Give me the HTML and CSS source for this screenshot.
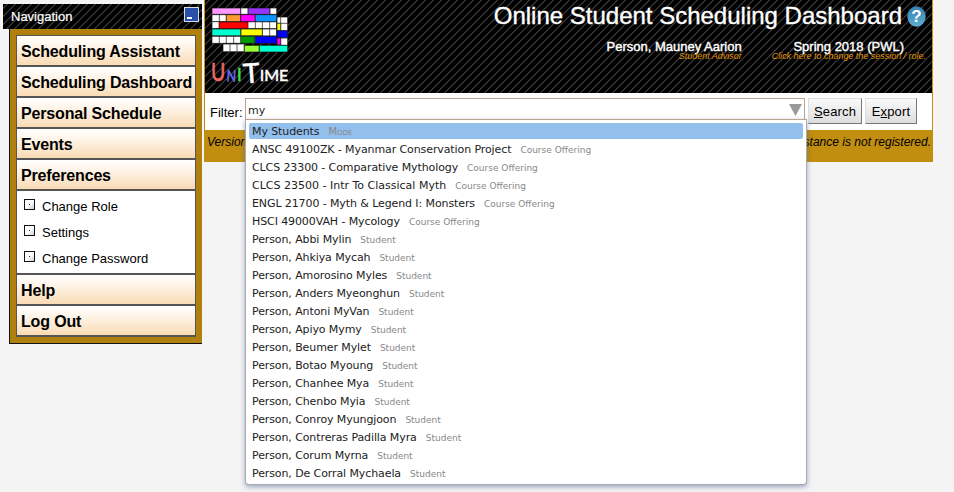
FILE: index.html
```html
<!DOCTYPE html>
<html lang="en">
<head>
<meta charset="utf-8">
<title>Online Student Scheduling Dashboard</title>
<link rel="stylesheet" href="styles.css">
</head>
<body>
<div class="page">
  <nav class="nav">
    <div class="nav-head"><span>Navigation</span><span class="minimize"></span></div>
    <div class="nav-body">
      <div class="menu">
        <a class="item">Scheduling Assistant</a>
        <a class="item">Scheduling Dashboard</a>
        <a class="item">Personal Schedule</a>
        <a class="item">Events</a>
        <a class="item">Preferences</a>
        <div class="sub">
          <a class="sub-item"><i class="box"></i>Change Role</a>
          <a class="sub-item"><i class="box"></i>Settings</a>
          <a class="sub-item"><i class="box"></i>Change Password</a>
        </div>
        <a class="item">Help</a>
        <a class="item">Log Out</a>
      </div>
    </div>
  </nav>
  <main class="main">
    <header class="header">
      <svg class="logo" viewBox="15 0 315 279">
        <g stroke="#111" stroke-width="2">
          <g fill="#fff">
            <path d="M122 24h108v19H122zM144 24v19M210 24v19"/>
            <path d="M36 44h194v21H36zM58 44v21M79 44v21"/>
            <path d="M36 65h194v21H36zM166 65v21M187 65v21M209 65v21"/>
            <path d="M36 87h194v21H36zM187 87v21M209 87v21"/>
            <path d="M36 109h194v21H36zM58 109v21M79 109v21M101 109v21"/>
            <path d="M231 51h32v85H231zM242 51v85M231 70h32M231 92h32M231 114h32"/>
            <path d="M69 132h64v23H69zM90 132v23M111 132v23"/>
          </g>
          <path fill="#f9f" d="M36 24h86v19H36z"/>
          <path fill="#9933ff" d="M145 24h64v19h-64z"/>
          <path fill="#f93" d="M79 44h43v21H79z"/>
          <path fill="#f0f" d="M122 44h44v21h-44z"/>
          <path fill="#0a95ff" d="M166 44h64v21h-64z"/>
          <path fill="#f00" d="M57 66h87v20H57z"/>
          <path fill="#00ffcf" d="M36 87h86v20H36z"/>
          <path fill="#ff0" d="M123 87h64v20h-64zM231 70h11v22h-11z"/>
          <path fill="#009b00" d="M122 109h43v21h-43z"/>
          <path fill="#00f" d="M166 109h64v21h-64zM231 92h32v21h-32z"/>
          <path fill="#f0f" d="M231 114h11v20h-11z"/>
          <path fill="#9f3" d="M133 136h45v20h-45z"/>
          <path fill="#00ffcf" d="M178 136h85v20h-85z"/>
        </g>
        <g class="wordmark">
          <text x="33" y="243" fill="#f06a62" stroke="#f06a62" font-size="74" textLength="43" lengthAdjust="spacingAndGlyphs">U</text>
          <text x="79" y="244" fill="#6670f5" stroke="#6670f5" font-size="48" textLength="29" lengthAdjust="spacingAndGlyphs" transform="rotate(3 79 244)">N</text>
          <text x="111" y="244" fill="#40df50" stroke="#40df50" font-size="50">I</text>
          <text x="131" y="249" fill="#fff" stroke="#fff" font-size="82" textLength="50" lengthAdjust="spacingAndGlyphs" transform="rotate(-4 150 249)">T</text>
          <text x="179" y="244" fill="#fff" stroke="#fff" font-size="48" textLength="86" lengthAdjust="spacingAndGlyphs">IME</text>
        </g>
      </svg>
      <div class="head-right">
        <div class="title"><h1>Online Student Scheduling Dashboard</h1>
          <svg class="help" viewBox="0 0 19 21"><defs><linearGradient id="hg" x2="0" y2="1"><stop stop-color="#347fae"/><stop offset="1" stop-color="#5eaed3"/></linearGradient></defs><ellipse cx="9.5" cy="10.5" rx="9.2" ry="10.2" fill="url(#hg)"/><text x="9.5" y="16.2" text-anchor="middle">?</text></svg>
        </div>
        <div class="who">
          <div class="who-col"><strong>Person, Mauney Aarion</strong><em>Student Advisor</em></div>
          <div class="who-col session"><strong>Spring 2018 (PWL)</strong><em>Click here to change the session / role.</em></div>
        </div>
      </div>
    </header>
    <div class="filter">
      <label>Filter:</label>
      <div class="field"><span>my</span><i class="arrow"></i>
        <div class="drop">
          <div class="opt selected"><b>My Students</b><small class="mode">Mode</small></div>
          <div class="opt"><b>ANSC 49100ZK - Myanmar Conservation Project</b><small>Course Offering</small></div>
          <div class="opt"><b>CLCS 23300 - Comparative Mythology</b><small>Course Offering</small></div>
          <div class="opt"><b class="wide">CLCS 23500 - Intr To Classical Myth</b><small>Course Offering</small></div>
          <div class="opt"><b>ENGL 21700 - Myth &amp; Legend I: Monsters</b><small>Course Offering</small></div>
          <div class="opt"><b>HSCI 49000VAH - Mycology</b><small>Course Offering</small></div>
          <div class="opt"><b>Person, Abbi Mylin</b><small>Student</small></div>
          <div class="opt"><b>Person, Ahkiya Mycah</b><small>Student</small></div>
          <div class="opt"><b>Person, Amorosino Myles</b><small>Student</small></div>
          <div class="opt"><b>Person, Anders Myeonghun</b><small>Student</small></div>
          <div class="opt"><b>Person, Antoni MyVan</b><small>Student</small></div>
          <div class="opt"><b>Person, Apiyo Mymy</b><small>Student</small></div>
          <div class="opt"><b>Person, Beumer Mylet</b><small>Student</small></div>
          <div class="opt"><b>Person, Botao Myoung</b><small>Student</small></div>
          <div class="opt"><b>Person, Chanhee Mya</b><small>Student</small></div>
          <div class="opt"><b>Person, Chenbo Myia</b><small>Student</small></div>
          <div class="opt"><b>Person, Conroy Myungjoon</b><small>Student</small></div>
          <div class="opt"><b>Person, Contreras Padilla Myra</b><small>Student</small></div>
          <div class="opt"><b>Person, Corum Myrna</b><small>Student</small></div>
          <div class="opt"><b>Person, De Corral Mychaela</b><small>Student</small></div>
        </div>
      </div>
      <button class="search"><u>S</u>earch</button>
      <button class="export">E<u>x</u>port</button>
    </div>
    <footer class="footer"><span>Version</span><span>stance is not registered.</span></footer>
  </main>
</div>
</body>
</html>
```
FILE: styles.css
```css
* { box-sizing: border-box; }
html { overflow: hidden; }
body { margin: 0; background: #f4f4f4; color: #000; font-family: "Liberation Sans", Arial, sans-serif; }
.page { display: flex; height: 492px; padding-left: 3px; align-items: flex-start; overflow: hidden; }
.nav { width: 199px; margin-top: 4px; }
.nav-head, .header { background: linear-gradient(135deg, #000 18.75%, #303030 18.75% 31.25%, #000 31.25% 68.75%, #303030 68.75% 81.25%, #000 81.25%) 0 0 / 8px 8px; }
.nav-head { height: 25px; display: flex; justify-content: space-between; padding: 3px 3px 0 8px; color: #fff; font-size: 13px; line-height: 19px; letter-spacing: 0; -webkit-text-stroke: .2px #fff; }
.minimize { width: 15px; height: 15px; border: 1px solid #d7dce8; background: linear-gradient(#fff, #fff) 2px 9px / 5px 2px no-repeat #2950a8; }
.nav-body { margin-left: 6px; height: 315px; padding: 6px; background: #b0800f; border-left: 1px solid #111; border-bottom: 1px solid #111; }
.menu { width: 180px; border: 1px solid #555; }
.item { display: block; height: 31px; padding-left: 4px; border-bottom: 2px solid #555; background: linear-gradient(#fff, #fff8f0 25%, #f9dbb4); font-weight: bold; font-size: 16px; line-height: 31px; letter-spacing: -0.16px; white-space: nowrap; }
.item:last-child { height: 30px; border-bottom-width: 1px; }
.sub { height: 84px; padding: 2px 0 0 7px; background: #fff; border-bottom: 2px solid #555; }
.sub-item { display: flex; align-items: center; height: 26px; font-size: 13px; }
.box { width: 11px; height: 11px; margin: -4px 7px 0 0; border: 1px solid #111; background: linear-gradient(#222, #222) 4px 4px / 1px 1px no-repeat, linear-gradient(135deg, #fff 50%, #ccc); }
.main { width: 729px; margin-left: 2px; height: 162px; border: solid #c18e0f; border-width: 0 1px; background: #fff; }
.header { height: 93px; display: flex; justify-content: space-between; color: #fff; }
.logo { width: 105px; height: 93px; flex: none; }
.wordmark { font-family: Lato, sans-serif; stroke-width: 1.5px; }
.head-right { padding-right: 6px; }
.title { display: flex; justify-content: flex-end; align-items: flex-start; height: 38px; gap: 5px; }
h1 { margin: 0; padding-top: 1px; font-weight: normal; font-size: 24px; line-height: 30px; white-space: nowrap; -webkit-text-stroke: .35px #fff; }
.help { width: 19px; height: 21px; margin-top: 6px; fill: #fff; font-size: 17px; font-weight: bold; }
.who { display: flex; justify-content: flex-end; gap: 30px; }
.who-col { display: flex; flex-direction: column; align-items: flex-end; }
.who-col strong { font-size: 13px; font-weight: normal; line-height: 17px; -webkit-text-stroke: .4px #fff; }
.who-col em { font-size: 9px; line-height: 11px; margin-top: -4px; color: #e0950f; letter-spacing: -.02px; }
.session strong { margin-right: 22px; }
.filter { height: 37px; display: flex; align-items: flex-start; padding-top: 5px; }
.filter label { width: 40px; padding: 7px 0 0 5px; font-size: 13px; line-height: 16px; }
.field { position: relative; width: 560px; height: 22px; border: 1px solid #b9a392; display: flex; justify-content: space-between; padding: 0 2px; font: 11px/24px "DejaVu Sans", sans-serif; color: #222; }
.arrow { width: 13px; height: 12px; margin-top: 5px; background: #999; clip-path: polygon(0 0, 100% 0, 50% 100%); }
.drop { position: absolute; z-index: 2; left: -1px; top: 20px; width: 562px; height: 366px; padding: 3px; border: 1px solid #aaa; border-top-color: #b9a392; border-radius: 0 0 4px 4px; background: #fff; box-shadow: 0 2px 5px rgba(60,90,150,.5); }
.opt { height: 18px; padding: 1px 0 0 3px; display: flex; align-items: center; font-size: 11px; letter-spacing: -.1px; line-height: 18px; white-space: nowrap; border-radius: 2px; }
.opt b { font-weight: normal; }
.opt .wide { letter-spacing: 0; }
.opt small { margin-left: 9px; font-size: 9px; color: #888; letter-spacing: 0; }
.opt .mode { font-variant: small-caps; font-size: 10px; }
.opt.selected { background: #93bfed; height: 16px; margin-bottom: 1px; }
.filter button { height: 26px; margin: 0 0 0 3px; padding: 2px 0 0; border: 1px solid; border-color: #ddd #777 #777 #ddd; background: linear-gradient(#fafafa, #ddd); font: 13px/22px "Liberation Sans", sans-serif; letter-spacing: .15px; color: #000; }
.search { width: 54px; }
.export { width: 52px; }
.footer { height: 32px; background: #c18e0f; display: flex; justify-content: space-between; padding: 4px 1px 4px 2px; font-size: 12px; font-style: italic; line-height: 16px; }
```
